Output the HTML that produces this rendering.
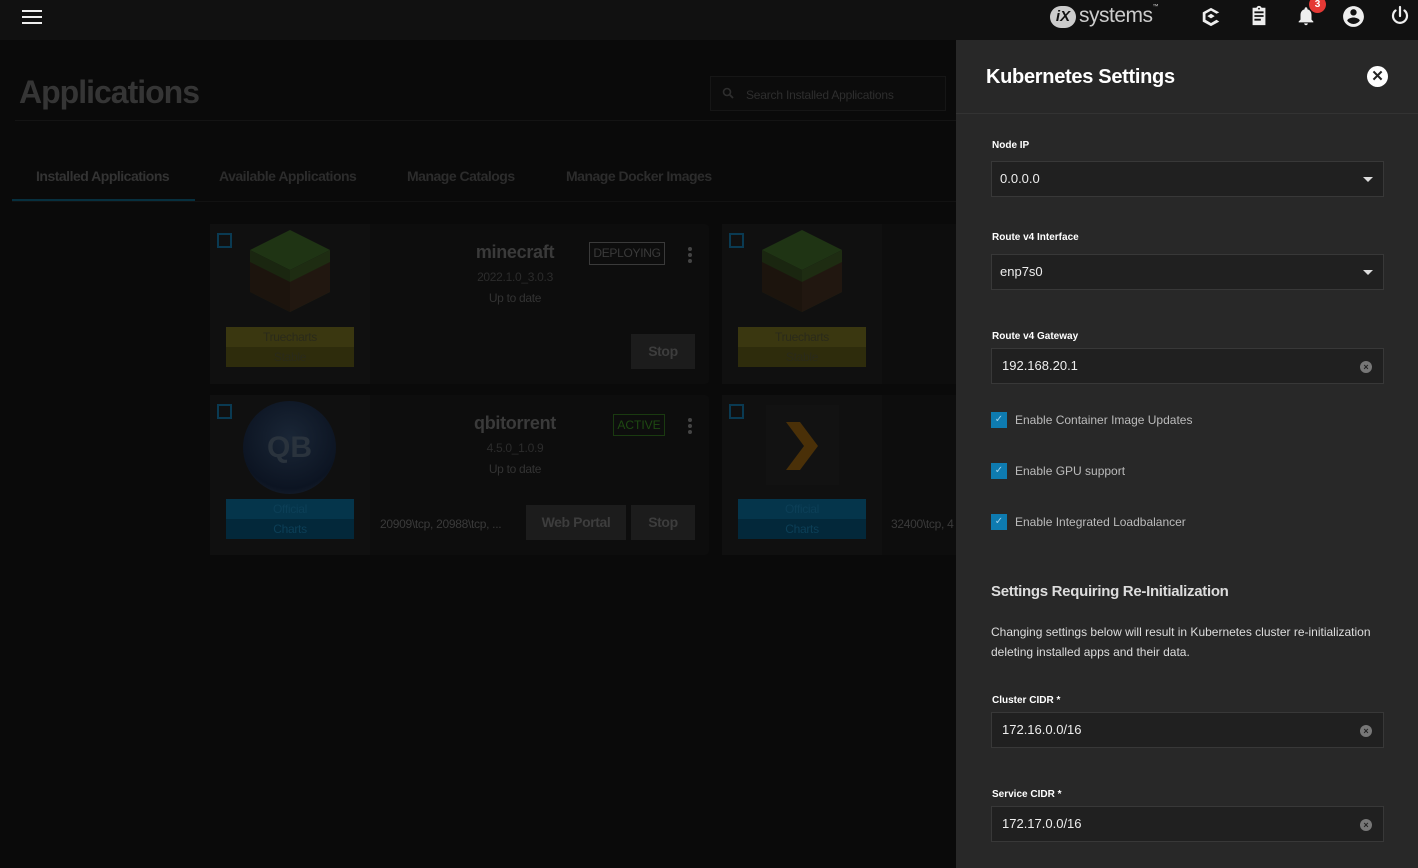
<!DOCTYPE html>
<html><head><meta charset="utf-8"><style>
*{box-sizing:border-box;margin:0;padding:0}
body{width:1418px;height:868px;overflow:hidden;background:#0a0a0a;font-family:"Liberation Sans",sans-serif;position:relative;color:#ddd}
.top{position:absolute;left:0;top:0;width:1418px;height:40px;background:#111}
.abs{position:absolute}
.card{position:absolute;background:#0d0d0d;border-radius:4px;width:488px;height:160px}
.card .l{position:absolute;left:0;top:0;width:160px;height:160px;background:#101010}
.cb{position:absolute;left:7px;top:9px;width:15px;height:15px;border:2px solid #0a3a52}
.badge{position:absolute;left:16px;width:128px;height:40px;font-size:12px;text-align:center;line-height:20px;letter-spacing:-0.3px}
.t{position:absolute;text-align:center;width:200px;left:205px;letter-spacing:-0.3px}
.btn{position:absolute;background:#1c1c1c;color:#3d3d3d;font-weight:bold;font-size:14px;text-align:center;line-height:35px;height:35px;letter-spacing:-0.4px}
.dots{position:absolute;left:478px;width:4px}
.dots i{display:block;width:4px;height:4px;background:#444;border-radius:2px;margin-bottom:2px}
.tab{position:absolute;top:168px;font-size:14px;font-weight:bold;color:#2c2c2c;letter-spacing:-0.5px}
.panel{position:absolute;left:956px;top:40px;width:462px;height:828px;background:#282828}
.lbl{position:absolute;left:36px;font-size:10px;font-weight:bold;color:#fff}
.inp{position:absolute;left:35px;width:393px;height:36px;background:#202020;border:1px solid #383838;font-size:13px;color:#eee;padding-left:8px;line-height:34px}
.arrow{position:absolute;right:10px;top:15px;width:0;height:0;border-left:5px solid transparent;border-right:5px solid transparent;border-top:5px solid #ddd}
.clr{position:absolute;right:11px;top:12px;width:12px;height:12px;border-radius:6px;background:#777;color:#222;font-size:9px;line-height:12px;text-align:center;font-weight:bold}
.chk{position:absolute;left:35px;width:16px;height:16px;background:#0e7bb0;color:#9fd0ea;font-size:10px;text-align:center;line-height:16px}
.ct{position:absolute;left:59px;font-size:12px;color:#bbb}
.mc{position:absolute;left:38px;top:4px;width:84px;height:84px}
</style></head><body>
<div class="top"></div>
<div class="abs" style="left:22px;top:10px;width:20px"><div style="height:2px;background:#eee;margin-bottom:4px"></div><div style="height:2px;background:#eee;margin-bottom:4px"></div><div style="height:2px;background:#eee"></div></div>
<div class="abs" style="left:1050px;top:6px;width:26px;height:22px;border-radius:11px;background:#ccc;color:#111;font-size:15px;font-weight:bold;font-style:italic;text-align:center;line-height:22px">iX</div>
<div class="abs" style="left:1079px;top:4px;font-size:21px;color:#ccc;letter-spacing:-0.5px">systems<span style="font-size:6px;vertical-align:top">™</span></div>
<svg class="abs" style="left:1200px;top:6px" width="22" height="22" viewBox="0 0 24 24"><path d="M12 2L3 7v10l9 5 9-5-3-2-6 3.5-6-3.5V8.5l6-3.5 6 3.5 3-1.5z" fill="#eee"/><path d="M8 11l4-2.5 4 2.5-4 2.5z" fill="#eee"/></svg>
<svg class="abs" style="left:1248px;top:5px" width="22" height="22" viewBox="0 0 24 24"><path d="M19 3h-4.2C14.4 1.8 13.3 1 12 1s-2.4.8-2.8 2H5v19h14V3zm-7 0c.6 0 1 .4 1 1s-.4 1-1 1-1-.4-1-1 .4-1 1-1zm2 14H7v-2h7v2zm3-4H7v-2h10v2zm0-4H7V7h10v2z" fill="#eee"/></svg>
<svg class="abs" style="left:1295px;top:5px" width="22" height="22" viewBox="0 0 24 24"><path d="M12 22c1.1 0 2-.9 2-2h-4c0 1.1.9 2 2 2zm6-6v-5c0-3.1-1.6-5.6-4.5-6.3V4c0-.8-.7-1.5-1.5-1.5s-1.5.7-1.5 1.5v.7C7.6 5.4 6 7.9 6 11v5l-2 2v1h16v-1l-2-2z" fill="#eee"/></svg>
<div class="abs" style="left:1309px;top:-4px;width:17px;height:17px;border-radius:9px;background:#e53935;color:#fff;font-size:10px;font-weight:bold;text-align:center;line-height:17px">3</div>
<svg class="abs" style="left:1341px;top:4px" width="25" height="25" viewBox="0 0 24 24"><path d="M12 2C6.5 2 2 6.5 2 12s4.5 10 10 10 10-4.5 10-10S17.5 2 12 2zm0 3c1.7 0 3 1.3 3 3s-1.3 3-3 3-3-1.3-3-3 1.3-3 3-3zm0 14.2c-2.5 0-4.7-1.3-6-3.2 0-2 4-3.1 6-3.1s6 1.1 6 3.1c-1.3 1.9-3.5 3.2-6 3.2z" fill="#eee"/></svg>
<svg class="abs" style="left:1388px;top:4px" width="24" height="24" viewBox="0 0 24 24"><path d="M12 3v9M7.5 6.5a7 7 0 1 0 9 0" stroke="#eee" stroke-width="2.2" fill="none" stroke-linecap="round"/></svg>

<div class="abs" style="left:19px;top:74px;font-size:32px;font-weight:bold;color:#353535;letter-spacing:-1px">Applications</div>
<div class="abs" style="left:710px;top:76px;width:236px;height:35px;border:1px solid #161616;background:#0c0c0c"></div>
<svg class="abs" style="left:722px;top:87px" width="12" height="12" viewBox="0 0 12 12"><circle cx="5" cy="5" r="3.5" stroke="#2e2e2e" stroke-width="1.6" fill="none"/><path d="M7.5 7.5L11 11" stroke="#2e2e2e" stroke-width="1.8"/></svg>
<div class="abs" style="left:746px;top:88px;font-size:12px;color:#2e2e2e;letter-spacing:-0.2px">Search Installed Applications</div>
<div class="abs" style="left:15px;top:120px;width:941px;height:1px;background:#141414"></div>
<div class="tab" style="left:36px;color:#333">Installed Applications</div>
<div class="tab" style="left:219px">Available Applications</div>
<div class="tab" style="left:407px">Manage Catalogs</div>
<div class="tab" style="left:566px">Manage Docker Images</div>
<div class="abs" style="left:12px;top:199px;width:183px;height:2px;background:#07303f"></div>
<div class="abs" style="left:12px;top:201px;width:944px;height:1px;background:#121212"></div>

<!-- card 1 -->
<div class="card" style="left:210px;top:224px;width:499px"><div class="l"></div><div class="cb"></div>
<svg class="mc" viewBox="0 0 84 84"><path d="M42 2L82 22 42 42 2 22z" fill="#1f3414"/><path d="M2 22L42 42V84L2 64z" fill="#1a2610"/><path d="M82 22L42 42V84L82 64z" fill="#1e2c12"/><path d="M2 34L42 54V84L2 64z" fill="#1c140d"/><path d="M82 34L42 54V84L82 64z" fill="#211710"/></svg>
<div class="badge" style="top:103px;background:linear-gradient(#3a3710 50%,#2e2c0c 50%);color:#2a2a1a">Truecharts<br>Stable</div>
<div class="t" style="top:18px;font-size:18px;font-weight:bold;color:#3a3a3a">minecraft</div>
<div class="t" style="top:46px;font-size:12px;color:#2c2c2c">2022.1.0_3.0.3</div>
<div class="t" style="top:67px;font-size:12px;color:#333">Up to date</div>
<div class="abs" style="left:379px;top:18px;width:76px;height:23px;border:1px solid #3a3a3a;font-size:12px;color:#3a3a3a;text-align:center;line-height:21px;letter-spacing:-0.3px">DEPLOYING</div>
<div class="dots" style="top:23px"><i></i><i></i><i></i></div>
<div class="btn" style="left:421px;top:110px;width:64px">Stop</div>
</div>
<div class="card" style="left:722px;top:224px;width:234px;border-radius:4px 0 0 4px"><div class="l"></div><div class="cb"></div>
<svg class="mc" viewBox="0 0 84 84"><path d="M42 2L82 22 42 42 2 22z" fill="#1f3414"/><path d="M2 22L42 42V84L2 64z" fill="#1a2610"/><path d="M82 22L42 42V84L82 64z" fill="#1e2c12"/><path d="M2 34L42 54V84L2 64z" fill="#1c140d"/><path d="M82 34L42 54V84L82 64z" fill="#211710"/></svg>
<div class="badge" style="top:103px;background:linear-gradient(#3a3710 50%,#2e2c0c 50%);color:#2a2a1a">Truecharts<br>Stable</div>
</div>
<!-- card 3 -->
<div class="card" style="left:210px;top:395px;width:499px"><div class="l"></div><div class="cb"></div>
<div class="abs" style="left:33px;top:6px;width:93px;height:93px;border-radius:50%;background:radial-gradient(circle at 50% 40%,#1a2636,#0c1422 70%,#262e3a);font-size:30px;font-weight:bold;color:#2a333d;text-align:center;line-height:93px">QB</div>
<div class="badge" style="top:104px;background:linear-gradient(#05354b 50%,#03283a 50%);color:#0c3f57">Official<br>Charts</div>
<div class="t" style="top:18px;font-size:18px;font-weight:bold;color:#3a3a3a">qbitorrent</div>
<div class="t" style="top:46px;font-size:12px;color:#2c2c2c">4.5.0_1.0.9</div>
<div class="t" style="top:67px;font-size:12px;color:#333">Up to date</div>
<div class="abs" style="left:403px;top:19px;width:52px;height:22px;border:1px solid #1a3a10;font-size:12px;color:#1e4a12;text-align:center;line-height:20px">ACTIVE</div>
<div class="dots" style="top:23px"><i></i><i></i><i></i></div>
<div class="abs" style="left:170px;top:122px;font-size:12px;color:#3a3a3a;white-space:nowrap;letter-spacing:-0.3px">20909\tcp, 20988\tcp, ...</div>
<div class="btn" style="left:316px;top:110px;width:100px">Web Portal</div>
<div class="btn" style="left:421px;top:110px;width:64px">Stop</div>
</div>
<div class="card" style="left:722px;top:395px;width:234px;border-radius:4px 0 0 4px"><div class="l"></div><div class="cb"></div>
<div class="abs" style="left:44px;top:10px;width:73px;height:80px;background:#121212"></div>
<svg class="abs" style="left:64px;top:27px" width="32" height="48" viewBox="0 0 32 48"><path d="M0 0h14l18 24-18 24H0l18-24z" fill="#4a3008"/></svg>
<div class="badge" style="top:104px;background:linear-gradient(#05354b 50%,#03283a 50%);color:#0c3f57">Official<br>Charts</div>
<div class="abs" style="left:169px;top:122px;font-size:12px;color:#3a3a3a;white-space:nowrap;letter-spacing:-0.3px">32400\tcp, 4</div>
</div>

<div class="panel">
<div class="abs" style="left:0;top:0;width:462px;height:74px;background:#282828;border-bottom:1px solid #333"></div>
<div class="abs" style="left:30px;top:26px;font-size:20px;font-weight:bold;color:#fff;letter-spacing:-0.3px">Kubernetes Settings</div>
<div class="abs" style="left:411px;top:26px;width:21px;height:21px;border-radius:50%;background:#fff;color:#222;text-align:center;font-size:15px;line-height:21px;font-weight:bold">✕</div>
<div class="lbl" style="top:100px">Node IP</div>
<div class="inp" style="top:121px">0.0.0.0<div class="arrow"></div></div>
<div class="lbl" style="top:192px">Route v4 Interface</div>
<div class="inp" style="top:214px">enp7s0<div class="arrow"></div></div>
<div class="lbl" style="top:291px">Route v4 Gateway</div>
<div class="inp" style="top:308px;padding-left:10px">192.168.20.1<div class="clr">×</div></div>
<div class="chk" style="top:372px">✓</div><div class="ct" style="top:373px">Enable Container Image Updates</div>
<div class="chk" style="top:423px">✓</div><div class="ct" style="top:424px">Enable GPU support</div>
<div class="chk" style="top:474px">✓</div><div class="ct" style="top:475px">Enable Integrated Loadbalancer</div>
<div class="abs" style="left:35px;top:543px;font-size:15px;font-weight:bold;color:#ddd;letter-spacing:-0.3px">Settings Requiring Re-Initialization</div>
<div class="abs" style="left:35px;top:582px;font-size:12px;color:#ddd;line-height:20px;width:400px">Changing settings below will result in Kubernetes cluster re-initialization deleting installed apps and their data.</div>
<div class="lbl" style="top:655px">Cluster CIDR *</div>
<div class="inp" style="top:672px;padding-left:10px">172.16.0.0/16<div class="clr">×</div></div>
<div class="lbl" style="top:749px">Service CIDR *</div>
<div class="inp" style="top:766px;padding-left:10px">172.17.0.0/16<div class="clr">×</div></div>
</div>
</body></html>
